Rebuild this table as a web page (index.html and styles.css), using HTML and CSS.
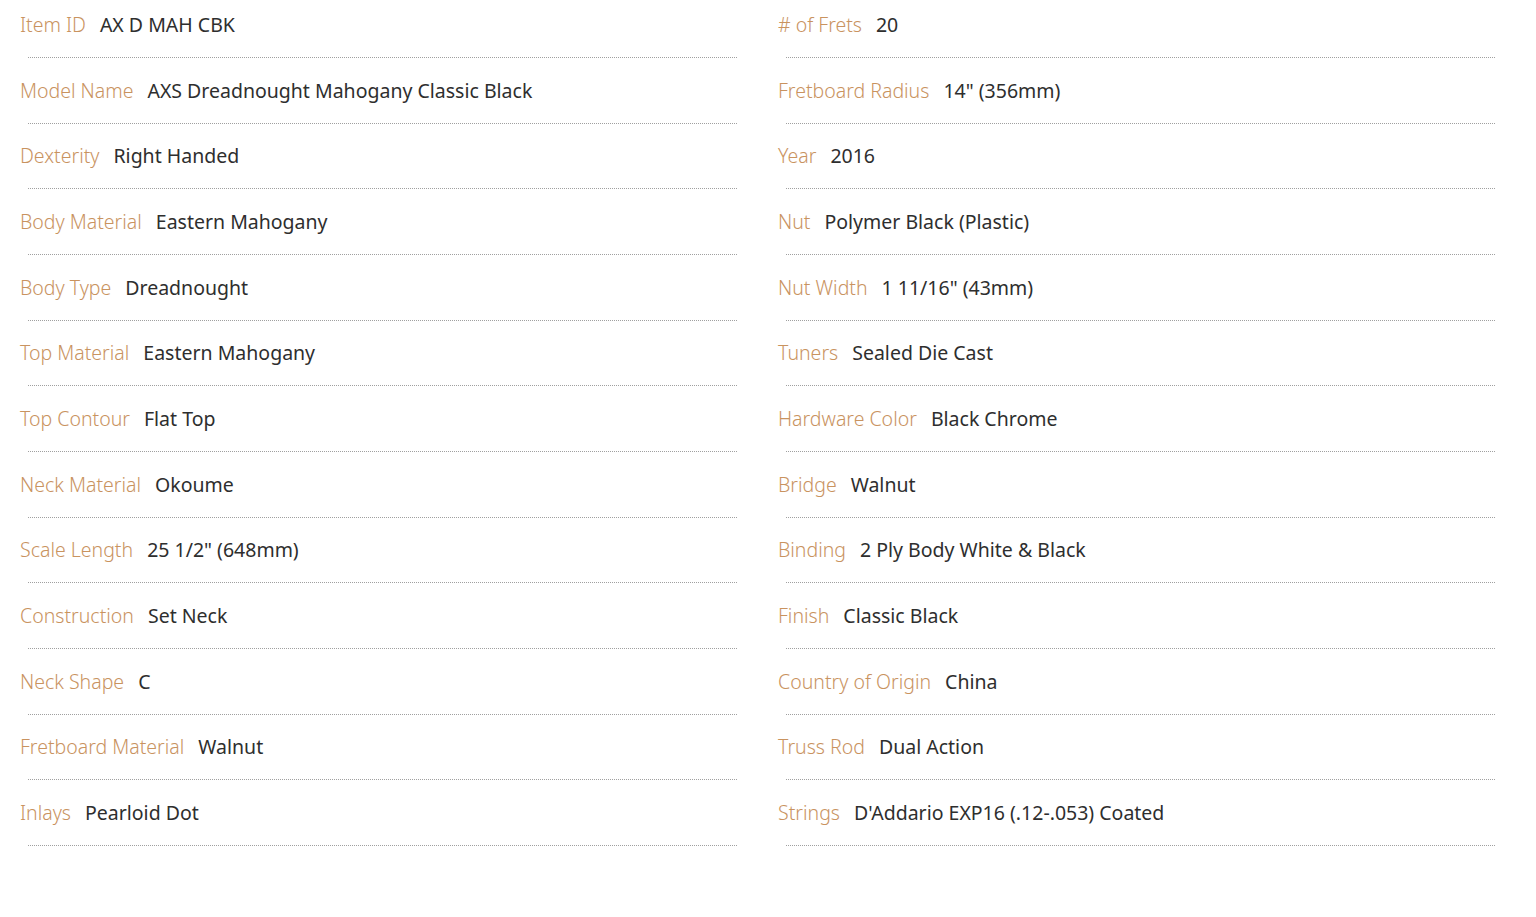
FILE: index.html
```html
<!DOCTYPE html>
<html lang="en">
<head>
<meta charset="utf-8">
<title>Specs</title>
<link rel="stylesheet" href="styles.css">
</head>
<body>
<div class="specs">
  <ul class="col">
    <li class="item"><span class="label">Item ID</span><span class="value">AX D MAH CBK</span></li>
    <li class="item"><span class="label">Model Name</span><span class="value">AXS Dreadnought Mahogany Classic Black</span></li>
    <li class="item"><span class="label">Dexterity</span><span class="value">Right Handed</span></li>
    <li class="item"><span class="label">Body Material</span><span class="value">Eastern Mahogany</span></li>
    <li class="item"><span class="label">Body Type</span><span class="value">Dreadnought</span></li>
    <li class="item"><span class="label">Top Material</span><span class="value">Eastern Mahogany</span></li>
    <li class="item"><span class="label">Top Contour</span><span class="value">Flat Top</span></li>
    <li class="item"><span class="label">Neck Material</span><span class="value">Okoume</span></li>
    <li class="item"><span class="label">Scale Length</span><span class="value">25 1/2" (648mm)</span></li>
    <li class="item"><span class="label">Construction</span><span class="value">Set Neck</span></li>
    <li class="item"><span class="label">Neck Shape</span><span class="value">C</span></li>
    <li class="item"><span class="label">Fretboard Material</span><span class="value">Walnut</span></li>
    <li class="item"><span class="label">Inlays</span><span class="value">Pearloid Dot</span></li>
  </ul>
  <ul class="col">
    <li class="item"><span class="label"># of Frets</span><span class="value">20</span></li>
    <li class="item"><span class="label">Fretboard Radius</span><span class="value">14" (356mm)</span></li>
    <li class="item"><span class="label">Year</span><span class="value">2016</span></li>
    <li class="item"><span class="label">Nut</span><span class="value">Polymer Black (Plastic)</span></li>
    <li class="item"><span class="label">Nut Width</span><span class="value">1 11/16" (43mm)</span></li>
    <li class="item"><span class="label">Tuners</span><span class="value">Sealed Die Cast</span></li>
    <li class="item"><span class="label">Hardware Color</span><span class="value">Black Chrome</span></li>
    <li class="item"><span class="label">Bridge</span><span class="value">Walnut</span></li>
    <li class="item"><span class="label">Binding</span><span class="value">2 Ply Body White &amp; Black</span></li>
    <li class="item"><span class="label">Finish</span><span class="value">Classic Black</span></li>
    <li class="item"><span class="label">Country of Origin</span><span class="value">China</span></li>
    <li class="item"><span class="label">Truss Rod</span><span class="value">Dual Action</span></li>
    <li class="item"><span class="label">Strings</span><span class="value">D'Addario EXP16 (.12-.053) Coated</span></li>
  </ul>
</div>
</body>
</html>
```

FILE: styles.css
```css
html, body {
  margin: 0;
  padding: 0;
  background: #ffffff;
}
body {
  font-family: "Noto Sans", "Open Sans", sans-serif;
}
.specs {
  display: grid;
  grid-template-columns: 717px 717px;
  column-gap: 41px;
  padding: 10px 0 0 20px;
}
.col {
  list-style: none;
  margin: 0;
  padding: 0;
}
.item {
  display: block;
  padding-bottom: 17.67px;
}
.item::after {
  content: "";
  display: block;
  margin: 17px 0 0 8px;
  border-top: 1px dotted #a0a0a0;
}
.label, .value {
  line-height: 30px;
  white-space: nowrap;
}
.label {
  font-size: 19.5px;
  color: #c9935f;
  font-weight: 300;
  margin-right: 14px;
}
.value {
  font-size: 19.5px;
  color: #2e2e2e;
  font-weight: 400;
}
```
